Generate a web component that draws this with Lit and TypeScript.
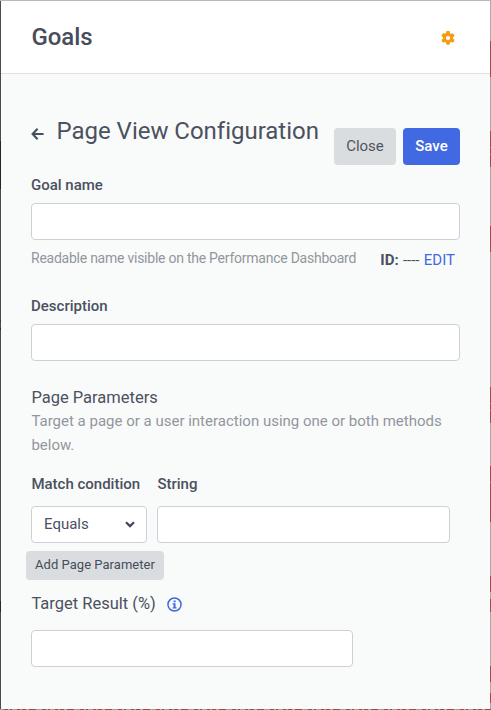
import { LitElement, html, css, svg } from "lit";
import { customElement } from "lit/decorators.js";

const arrow = svg`<path d="M6.6 .7 1.6 6 6.6 11.3M1.8 6H12.6" fill="none" stroke="#47505e" stroke-width="2.1"/>`;

@customElement("app-root")
export class AppRoot extends LitElement {
  static styles = css`
    :host { display: block; font-family: Roboto, "Liberation Sans", sans-serif; color: #4b5160; font-size: 15px; }
    * { box-sizing: border-box; }
    .frame { display: grid; grid-template: 1px 708px 1px / 1px 489px 1px; width: 491px; height: 710px; overflow: hidden; }
    .top { grid-column: 1 / 4; background: #b9b9b9; }
    .left { background: linear-gradient(#4b4b4d 0 140px, #252529 140px 188px, #4b4b4d 188px 319px, #38383a 319px 321px, #4b4b4d 321px 327px, #2d2d30 327px 329px, #4b4b4d 329px 600px, #29292c 600px 611px, #4b4b4d 611px); }
    .right { background: linear-gradient(#aaa 0 40px, #ab4646 40px 76px, #aaa 76px 130px, #ab4646 130px 146px, #b88 146px 147px, #ab4646 147px 153px, #b88 153px 154px, #ab4646 154px 166px, #aaa 166px 225px, #ab4646 225px 251px, #aaa 251px 386px, #ab4646 386px 402px, #b88 402px 403px, #ab4646 403px 409px, #b88 409px 410px, #ab4646 410px 422px, #aaa 422px 465px, #ab4646 465px 481px, #b88 481px 482px, #a34a60 482px 488px, #ab4646 488px 521px, #aaa 521px 575px, #ab4646 575px 591px, #aaa 591px 598px, #ab4646 598px 611px, #aaa 611px 665px, #ab4646 665px 681px, #aaa 681px 692px, #ab4646 692px 702px, #aaa 702px); }
    .bottom { grid-column: 1 / 4; background: repeating-linear-gradient(90deg, #aa9a90 0 4px, #a84646 4px 8px, #a5a59c 8px 10px, #a84646 10px 12px, #a8a294 12px 17px, #a84646 17px 20px, #b59a80 20px 22px, #a84646 22px 26px, #aaa 26px 29px, #a84646 29px 36px, #a0a58f 36px 38px); }
    .panel { display: flex; flex-direction: column; background: #f9fbfa; min-width: 0; }
    .header { display: flex; justify-content: space-between; align-items: center; height: 73px; background: #fff; border-bottom: 1px solid #dfe0e2; padding: 0 35px 0 30.5px; }
    .brand { font-size: 24px; font-weight: 500; line-height: 28px; color: #474d5b; letter-spacing: -0.05px; }
    .gear { width: 14px; height: 14px; display: block; margin-top: 2px; }
    .body { padding: 0 30px; }
    .title-row { display: flex; height: 91px; padding-top: 43px; }
    .back { width: 13px; height: 12px; margin: 10.5px 0 0; display: block; }
    .title { font-size: 24px; line-height: 28px; margin: 0 0 0 12.5px; font-weight: 400; flex: 1; white-space: nowrap; letter-spacing: -0.02px; }
    .btn { border: 0; border-radius: 4px; background: #dadde0; color: #50555f; font: 400 15px/37px Roboto, sans-serif; height: 37px; padding: 0; margin-top: 11px; }
    .close { width: 62px; }
    .save { width: 57px; margin-left: 7px; background: #4169e1; color: #fff; font-weight: 500; }
    .label { display: block; font-weight: 500; line-height: 18px; }
    .name-label { margin-top: 11px; }
    .box { display: block; width: 100%; height: 37px; border: 1px solid #cdd0da; border-radius: 4px; background: #fff; padding: 0 10px; outline: 0; }
    .name-label + .box, .desc-label + .box { margin-top: 9px; }
    .hint-row { display: flex; justify-content: space-between; padding: 9px 5px 0 0; height: 57px; }
    .hint { font-size: 14px; line-height: 18px; color: #92969e; white-space: nowrap; letter-spacing: -0.245px; }
    .id { line-height: 18px; margin-top: 2px; white-space: nowrap; }
    .id-key { font-weight: 700; margin-right: 0.5px; }
    .edit { color: #4169e1; margin-left: 0.6px; }
    .section { font-size: 16.5px; line-height: 24px; font-weight: 400; margin: 25px 0 0 0.4px; }
    .copy { margin: -1px 0 0 0.4px; line-height: 24px; color: #92969e; }
    .params { display: grid; grid-template-columns: 116px 293px; column-gap: 10px; row-gap: 13px; margin-top: 18px; }
    .param-label { white-space: nowrap; padding-left: 0.4px; }
    .select { display: flex; align-items: center; justify-content: space-between; padding: 0 11px 0 12px; }
    .value { margin-top: -2px; }
    .chevron { width: 10px; height: 7px; display: block; }
    .add { display: block; width: 138px; height: 29px; margin: 8px 0 0 -5px; font-size: 13px; line-height: 27px; color: #464c58; padding-bottom: 2px; letter-spacing: 0.03px; }
    .result { display: flex; align-items: center; margin-top: 12px; }
    .result-title { font-size: 16.5px; line-height: 24px; margin-left: 0.4px; }
    .info { width: 15px; height: 15px; margin: 1px 0 0 11px; display: block; }
    .target { width: 322px; margin-top: 14px; }
  `;

  render() {
    return html`
      <div class="frame">
        <div class="top"></div>
        <div class="left"></div>
        <main class="panel">
          <header class="header">
            <span class="brand">Goals</span>
            <svg class="gear" viewBox="2 2 20 20"><path fill="#f59c12" d="M19.14 12.94c.04-.3.06-.61.06-.94s-.02-.64-.07-.94l2.03-1.58a.49.49 0 0 0 .12-.61l-1.92-3.32a.49.49 0 0 0-.59-.22l-2.39.96c-.5-.38-1.03-.7-1.62-.94l-.36-2.54A.48.48 0 0 0 13.92 2h-3.84a.47.47 0 0 0-.47.41l-.36 2.54c-.59.24-1.13.57-1.62.94l-2.39-.96a.48.48 0 0 0-.59.22L2.74 8.87c-.12.21-.08.47.12.61l2.03 1.58c-.05.3-.09.63-.09.94s.02.64.07.94l-2.03 1.58a.49.49 0 0 0-.12.61l1.92 3.32c.12.22.37.29.59.22l2.39-.96c.5.38 1.03.7 1.62.94l.36 2.54c.05.24.24.41.48.41h3.84c.24 0 .44-.17.47-.41l.36-2.54c.59-.24 1.13-.56 1.62-.94l2.39.96c.22.08.47 0 .59-.22l1.92-3.32a.48.48 0 0 0-.12-.61zM12 15a3 3 0 1 1 0-6 3 3 0 0 1 0 6z"/></svg>
          </header>
          <div class="body">
            <div class="title-row">
              <svg class="back" viewBox="0 0 13 12">${arrow}</svg>
              <h1 class="title">Page View Configuration</h1>
              <button class="btn close">Close</button>
              <button class="btn save">Save</button>
            </div>
            <label class="label name-label" for="name">Goal name</label>
            <input class="box" id="name" />
            <div class="hint-row">
              <span class="hint">Readable name visible on the Performance Dashboard</span>
              <span class="id"><span class="id-key">ID:</span> ---- <span class="edit">EDIT</span></span>
            </div>
            <label class="label desc-label" for="desc">Description</label>
            <input class="box" id="desc" />
            <h2 class="section">Page Parameters</h2>
            <p class="copy">Target a page or a user interaction using one or both methods below.</p>
            <div class="params">
              <span class="label param-label">Match condition</span>
              <span class="label param-label">String</span>
              <div class="box select">
                <span class="value">Equals</span>
                <svg class="chevron" viewBox="0 0 10 7"><path d="M1 1.2 5 5.1 9 1.2" fill="none" stroke="#40485c" stroke-width="2.2"/></svg>
              </div>
              <input class="box" />
            </div>
            <button class="btn add">Add Page Parameter</button>
            <div class="result">
              <span class="result-title">Target Result (%)</span>
              <svg class="info" viewBox="0 0 16 16">
                <circle cx="8" cy="8" r="7" fill="none" stroke="#4169e1" stroke-width="1.6"/>
                <path fill="#4169e1" d="M7 3.6h2.2v2H7zM6 6.6h3.1v4.2h1v1.4H6v-1.4h1V8H6z"/>
              </svg>
            </div>
            <input class="box target" />
          </div>
        </main>
        <div class="right"></div>
        <div class="bottom"></div>
      </div>
    `;
  }
}
